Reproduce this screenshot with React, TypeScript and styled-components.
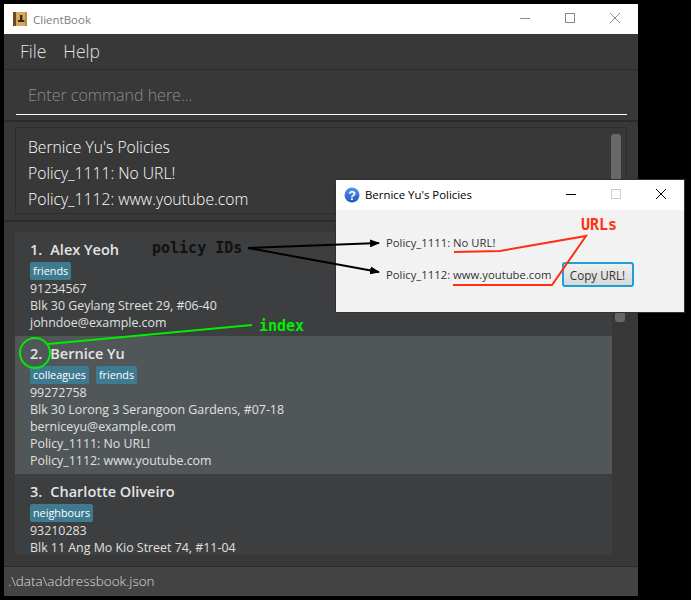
import React from 'react';
import styled, { createGlobalStyle } from 'styled-components';

const GlobalStyle = createGlobalStyle`
  html, body { margin: 0; padding: 0; background: #000; }
  * { box-sizing: border-box; }
`

const Screen = styled.div`
  position: relative;
  width: 691px;
  height: 600px;
  padding: 4px 53px 4px 4px;
  background: #000;
  font-family: "Open Sans", "Noto Sans", sans-serif;
  overflow: hidden;
`
const Window = styled.div`
  display: flex;
  flex-direction: column;
  height: 592px;
  background: #2b2b2b;
`
const TitleBar = styled.div`
  display: flex;
  align-items: center;
  flex: 0 0 30px;
  padding-left: 9px;
  background: #fff;
`
const WindowTitle = styled.span`
  margin-left: 6px;
  font-size: 11.5px;
  color: #7d7d7d;
`
const WindowControls = styled.div`
  display: flex;
  align-items: center;
  gap: 35px;
  margin-left: auto;
  padding: 0 18px 2px 0;
`
const MenuBar = styled.div`
  display: flex;
  align-items: center;
  gap: 17px;
  flex: 0 0 36px;
  padding: 0 0 2px 16px;
  background: #383838;
  border-bottom: 1px solid #2b2b2b;
`
const MenuItem = styled.span`
  font-size: 17.5px;
  font-weight: 300;
  color: #e0e0e0;
`
const CommandPane = styled.div`
  flex: 0 0 52px;
  padding: 0 11px 0 12px;
  background: #383838;
  border-bottom: 2px solid #2b2b2b;
`
const CommandInput = styled.div`
  height: 45px;
  padding: 14px 0 0 12px;
  border-bottom: 1px solid #fff;
  font-size: 16px;
  font-weight: 300;
  color: #8c8c8c;
`
const ResultPane = styled.div`
  flex: 0 0 100px;
  padding: 5px 11px 6px 11px;
  background: #383838;
  border-bottom: 2px solid #2b2b2b;
`
const ResultBox = styled.div`
  display: flex;
  justify-content: space-between;
  height: 87px;
  padding: 6px 5px 0 12px;
  border: 1px solid #2d2d2d;
`
const ResultLines = styled.div`
  font-size: 15.7px;
  font-weight: 300;
  line-height: 26px;
  color: #fff;
`
const ResultThumb = styled.div`
  width: 10px;
  height: 90px;
  border-radius: 3px;
  background: #686868;
`
const ListPane = styled.div`
  display: flex;
  flex: 1 1 auto;
  min-height: 0;
  padding: 10px 0 11px 11px;
  background: #383838;
  border-bottom: 1px solid #2b2b2b;
`
const ListViewport = styled.div`
  flex: 0 0 597px;
  overflow: hidden;
  background: #3c3e3f;
`
const ListTrack = styled.div`
  flex: 1;
  padding: 3px 0 0 3px;
`
const ListThumb = styled.div`
  width: 10px;
  height: 87px;
  border-radius: 3px;
  background: #686868;
`
const Card = styled.div<{ $selected?: boolean }>`
  padding-left: 15px;
  padding-bottom: 5px;
  background: ${(p) => (p.$selected ? '#515658' : '#3c3e3f')};
`
const CardName = styled.div`
  display: flex;
  gap: 8px;
  height: 30px;
  align-items: center;
  font-size: 14.5px;
  font-weight: 600;
  color: #e4e4e4;
  padding-top: 4px;
`
const TagRow = styled.div`
  display: flex;
  gap: 7px;
  height: 18px;
`
const Tag = styled.span`
  height: 18px;
  padding: 0 3px;
  border-radius: 2px;
  background: #3e7b91;
  font-size: 10.8px;
  line-height: 18px;
  color: #fff;
`
const CardLine = styled.div`
  height: 17px;
  font-size: 12.4px;
  line-height: 17px;
  color: #e0e0e0;
`
const StatusBar = styled.div`
  flex: 0 0 29px;
  padding: 1px 0 0 4px;
  background: #434343;
  font-size: 13.5px;
  font-weight: 300;
  line-height: 27px;
  color: #ddd;
`
const Dialog = styled.div`
  position: absolute;
  left: 335px;
  top: 179px;
  width: 350px;
  height: 134px;
  display: flex;
  flex-direction: column;
  border: 1px solid #333;
  background: #f2f2f2;
`
const DialogTitleBar = styled.div`
  display: flex;
  align-items: center;
  flex: 0 0 30px;
  padding-left: 8px;
  background: #fff;
`
const DialogTitle = styled.span`
  margin: 0 0 1px 5px;
  font-size: 11.4px;
  color: #000;
`
const DialogBody = styled.div`
  display: flex;
  flex-direction: column;
  gap: 7px;
  padding: 20px 0 0 50px;
`
const PolicyRow = styled.div`
  display: flex;
  align-items: center;
  gap: 10px;
  height: 25px;
  font-size: 11.3px;
  color: #333;
`
const CopyButton = styled.button`
  height: 25px;
  width: 72px;
  padding: 0;
  border: 2px solid #1ba1d8;
  border-radius: 3px;
  background: linear-gradient(#f0f0f0, #d8d8d8);
  font-family: inherit;
  font-size: 11.7px;
  color: #333;
`
const Callout = styled.span<{ $color: string; $x: number; $y: number }>`
  position: absolute;
  left: ${(p) => p.$x}px;
  top: ${(p) => p.$y}px;
  font-family: "DejaVu Sans Mono", "Liberation Mono", monospace;
  font-size: 15px;
  font-weight: 700;
  line-height: 18px;
  color: ${(p) => p.$color};
`
const Annotations = styled.svg`
  position: absolute;
  left: 0;
  top: 0;
  pointer-events: none;
`

const AppIcon = () => (
  <svg width="14" height="14" viewBox="0 0 14 14">
    <rect x="0" y="0" width="14" height="14" fill="#d9a860" />
    <rect x="0" y="0" width="3" height="14" fill="#6b4a22" />
    <rect x="12" y="0" width="2" height="14" fill="#b98a48" />
    <rect x="7" y="3" width="2.4" height="5" fill="#3a2a14" />
    <rect x="5" y="8" width="6.4" height="2" fill="#3a2a14" />
  </svg>
)

const Minimize = ({ color }: { color: string }) => (
  <svg width="10" height="10" viewBox="0 0 10 10">
    <path d="M0 5.5H10" stroke={color} strokeWidth="1" />
  </svg>
)
const Maximize = ({ color }: { color: string }) => (
  <svg width="10" height="10" viewBox="0 0 10 10">
    <rect x="0.5" y="0.5" width="9" height="9" fill="none" stroke={color} />
  </svg>
)
const Close = ({ color }: { color: string }) => (
  <svg width="10" height="10" viewBox="0 0 10 10">
    <path d="M0 0L10 10M10 0L0 10" stroke={color} strokeWidth="1" />
  </svg>
)

const QuestionIcon = () => (
  <svg width="16" height="16" viewBox="0 0 16 16">
    <defs>
      <linearGradient id="qblue" x1="0" y1="0" x2="0" y2="1">
        <stop offset="0" stopColor="#5a94e8" />
        <stop offset="1" stopColor="#1f56c0" />
      </linearGradient>
    </defs>
    <circle cx="8" cy="8" r="7.5" fill="url(#qblue)" />
    <text x="8" y="12.5" textAnchor="middle" fontSize="12.5" fontWeight="700" fontFamily="Liberation Sans" fill="#fff">?</text>
  </svg>
)

const people = [
  { index: '1.', name: 'Alex Yeoh', tags: ['friends'], lines: ['91234567', 'Blk 30 Geylang Street 29, #06-40', 'johndoe@example.com'] },
  {
    index: '2.',
    name: 'Bernice Yu',
    tags: ['colleagues', 'friends'],
    selected: true,
    lines: ['99272758', 'Blk 30 Lorong 3 Serangoon Gardens, #07-18', 'berniceyu@example.com', 'Policy_1111: No URL!', 'Policy_1112: www.youtube.com'],
  },
  { index: '3.', name: 'Charlotte Oliveiro', tags: ['neighbours'], lines: ['93210283', 'Blk 11 Ang Mo Kio Street 74, #11-04'] },
]

const App = () => {
  return (
    <Screen>
      <GlobalStyle />
      <Window>
        <TitleBar>
          <AppIcon />
          <WindowTitle>ClientBook</WindowTitle>
          <WindowControls>
            <Minimize color="#8a8a8a" />
            <Maximize color="#8a8a8a" />
            <Close color="#8a8a8a" />
          </WindowControls>
        </TitleBar>
        <MenuBar>
          <MenuItem>File</MenuItem>
          <MenuItem>Help</MenuItem>
        </MenuBar>
        <CommandPane>
          <CommandInput>Enter command here...</CommandInput>
        </CommandPane>
        <ResultPane>
          <ResultBox>
            <ResultLines>
              <div>Bernice Yu's Policies</div>
              <div>Policy_1111: No URL!</div>
              <div>Policy_1112: www.youtube.com</div>
            </ResultLines>
            <ResultThumb />
          </ResultBox>
        </ResultPane>
        <ListPane>
          <ListViewport>
            {people.map((person) => (
              <Card key={person.index} $selected={person.selected}>
                <CardName>
                  <span>{person.index}</span>
                  <span>{person.name}</span>
                </CardName>
                <TagRow>
                  {person.tags.map((tag) => (
                    <Tag key={tag}>{tag}</Tag>
                  ))}
                </TagRow>
                {person.lines.map((line) => (
                  <CardLine key={line}>{line}</CardLine>
                ))}
              </Card>
            ))}
          </ListViewport>
          <ListTrack>
            <ListThumb />
          </ListTrack>
        </ListPane>
        <StatusBar>.\data\addressbook.json</StatusBar>
      </Window>

      <Dialog>
        <DialogTitleBar>
          <QuestionIcon />
          <DialogTitle>Bernice Yu's Policies</DialogTitle>
          <WindowControls>
            <Minimize color="#000" />
            <Maximize color="#ccc" />
            <Close color="#000" />
          </WindowControls>
        </DialogTitleBar>
        <DialogBody>
          <PolicyRow>
            <span>Policy_1111: No URL!</span>
          </PolicyRow>
          <PolicyRow>
            <span>Policy_1112: www.youtube.com</span>
            <CopyButton>Copy URL!</CopyButton>
          </PolicyRow>
        </DialogBody>
      </Dialog>

      <Annotations width="691" height="600" viewBox="0 0 691 600">
        <defs>
          <marker id="arrow" markerWidth="10" markerHeight="8" refX="9" refY="4" orient="auto" markerUnits="userSpaceOnUse">
            <path d="M0 0L10 4L0 8Z" fill="#000" />
          </marker>
        </defs>
        <path d="M248 248L379 243" stroke="#000" strokeWidth="2" fill="none" markerEnd="url(#arrow)" />
        <path d="M248 248L379 272" stroke="#000" strokeWidth="2" fill="none" markerEnd="url(#arrow)" />
        <path d="M454 252L500 251L586 236L552 285L453 285" stroke="#ff3010" strokeWidth="2" fill="none" />
        <circle cx="35" cy="353" r="15" stroke="#00ee00" strokeWidth="2" fill="none" />
        <path d="M48 344L252 325" stroke="#00ee00" strokeWidth="2" fill="none" />
      </Annotations>
      <Callout $color="#111" $x={152} $y={239}>policy IDs</Callout>
      <Callout $color="#00ee00" $x={259} $y={317}>index</Callout>
      <Callout $color="#ff3010" $x={581} $y={216}>URLs</Callout>
    </Screen>
  )
}

export default App;
